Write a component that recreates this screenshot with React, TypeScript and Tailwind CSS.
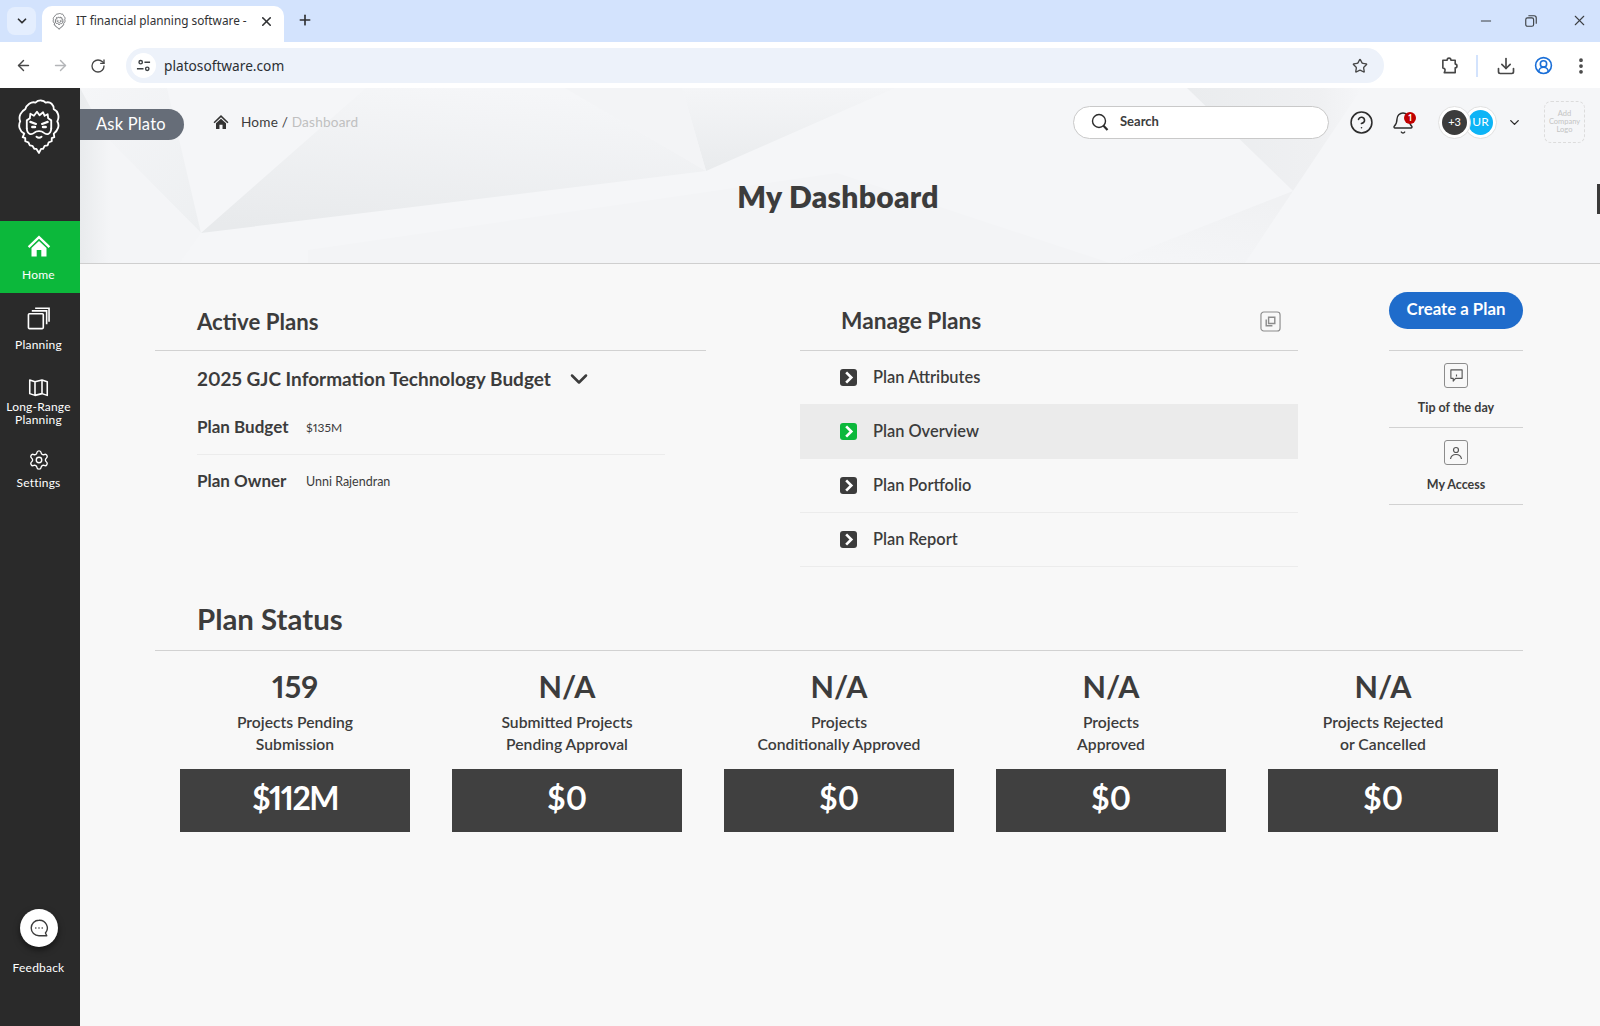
import React from "react";
import {
  ArrowLeft,
  ArrowRight,
  RotateCw,
  Star,
  Download,
  CircleUserRound,
  EllipsisVertical,
  Minus,
  X,
  Plus,
  ChevronDown,
  Settings,
  CircleHelp,
  Bell,
} from "lucide-react";

function HomeIcon({ className }: { className?: string }) {
  return (
    <svg viewBox="0 0 24 24" className={className} fill="currentColor">
      <path d="M12 1.5 0.8 12.2 2.4 14 12 4.8 21.6 14l1.6-1.8z" />
      <path d="M12 7 4.5 14v8.5h5.2V16h4.6v6.5h5.2V14z" />
    </svg>
  );
}

function PlatoLogo({ className, strokeWidth = 1.8 }: { className?: string; strokeWidth?: number }) {
  return (
    <svg viewBox="0 0 42 55" className={className} fill="none" stroke="currentColor" strokeWidth={strokeWidth} strokeLinejoin="round" strokeLinecap="round">
      <path d="M7 34C2 31 1 26 3 22 1 17 4 12 8 10 9 6 14 2 18 3.500 21 .5 26 1 28 3.500 33 2 36 6 36 10 40 12 42 17 39.500 22 42 26 40 31 36 34L36.500 37.500 34 38.500 34 41.500 31 42.500 30 45.500 27 46 25.500 49 23.500 49 21.500 53 19 49 17 49 15 46 12.500 45.500 11 42.500 8 41.500 8 38.500 5.500 37.500Z" />
      <path d="M9.500 29V21L12.500 19 13 14.500 16.500 16.500 19.500 12.500 22 16 25.500 13 27 16.500 30 15 30.500 19 33.500 21V29" />
      <path d="M9.500 29C10 35 14 35.500 17 33 19 31 24 31 26 33 29 35.500 33 35 33.500 29" />
      <path d="M13 22.500 18.500 24.500M30 22.500 24.500 24.500" strokeWidth={2.200} />
      <path d="M15 27.500H17.500M25.500 27.500H28" strokeWidth={2.600} />
      <path d="M19 37Q21.500 39 24 37" />
    </svg>
  );
}

function Chevron({ green }: { green?: boolean }) {
  return (
    <span className={`flex h-[17px] w-[17px] items-center justify-center rounded-[3px] ${green ? "bg-[#0cb83b]" : "bg-[#3c3c3c]"}`}>
      <svg viewBox="0 0 16 16" className="h-[15px] w-[15px]" fill="none" stroke="#fff" strokeWidth="2.800">
        <path d="M5.500 2.500 11 8l-5.500 5.500" />
      </svg>
    </span>
  );
}

function SideItem({ label, icon, active, heightClass, children }: { label?: string; icon: React.ReactNode; active?: boolean; heightClass: string; children?: React.ReactNode }) {
  return (
    <div className={`flex flex-col items-center pr-[3px] text-white ${heightClass} ${active ? "bg-[#0cb83b]" : ""}`}>
      {icon}
      {label ? <span className="text-[12px] leading-[14px] tracking-[0.2px]">{label}</span> : null}
      {children}
    </div>
  );
}

const statuses = [
  { count: "159", lines: ["Projects Pending", "Submission"], value: "$112M", vc: "tracking-[-1.5px]" },
  { count: "N/A", lines: ["Submitted Projects", "Pending Approval"], value: "$0", vc: "" },
  { count: "N/A", lines: ["Projects", "Conditionally Approved"], value: "$0", vc: "" },
  { count: "N/A", lines: ["Projects", "Approved"], value: "$0", vc: "" },
  { count: "N/A", lines: ["Projects Rejected", "or Cancelled"], value: "$0", vc: "" },
];

const plans = [
  { label: "Plan Attributes", h: "h-[53px]", extra: "" },
  { label: "Plan Overview", h: "h-[55px]", extra: "bg-[#ebebeb]", green: true },
  { label: "Plan Portfolio", h: "h-[54px]", extra: "border-b border-[#ececec]" },
  { label: "Plan Report", h: "h-[54px]", extra: "border-b border-[#ececec]" },
];

function HeaderArt() {
  return (
    <svg className="absolute inset-0 h-full w-full blur-[0.7px]" viewBox="0 0 1520 175" preserveAspectRatio="none">
      <defs>
        <linearGradient id="g1" x1="0.25" y1="1" x2="0.55" y2="0">
          <stop offset="0" stopColor="#e8eaec" />
          <stop offset="1" stopColor="#f5f6f8" />
        </linearGradient>
        <linearGradient id="g2" x1="0.5" y1="1" x2="0.5" y2="0">
          <stop offset="0" stopColor="#e9ebed" />
          <stop offset="1" stopColor="#f4f5f7" />
        </linearGradient>
        <linearGradient id="g3" x1="0" y1="0" x2="1" y2="1">
          <stop offset="0" stopColor="#f5f6f8" />
          <stop offset="1" stopColor="#edeff1" />
        </linearGradient>
        <linearGradient id="g4" x1="0" y1="0" x2="1" y2="0">
          <stop offset="0" stopColor="#eaecee" />
          <stop offset="0.75" stopColor="#eff0f2" />
          <stop offset="1" stopColor="#f5f6f8" />
        </linearGradient>
        <linearGradient id="g5" x1="0" y1="1" x2="0.6" y2="0">
          <stop offset="0" stopColor="#f5f6f8" />
          <stop offset="1" stopColor="#f0f1f3" />
        </linearGradient>
        <linearGradient id="g6" x1="0" y1="0" x2="1" y2="0">
          <stop offset="0" stopColor="#e9ebed" />
          <stop offset="0.25" stopColor="#f4f5f7" />
        </linearGradient>
      </defs>
      <rect width="1520" height="175" fill="#f5f6f8" />
      <polygon points="0,0 87,0 121,145 27,50" fill="url(#g3)" />
      <polygon points="0,0 27,50 121,145 100,175 0,175" fill="url(#g6)" />
      <polygon points="286,0 485,0 626,83 121,145" fill="url(#g1)" />
      <polygon points="602,0 815,0 626,83" fill="url(#g2)" />
      <polygon points="485,0 602,0 626,83" fill="#f3f4f6" />
      <polygon points="228,162 757,85 1030,175 228,175" fill="#f3f4f6" />
      <polygon points="1107,0 1282,0 1213,103" fill="url(#g4)" />
      <polygon points="1030,175 1213,103 1165,175" fill="url(#g5)" />
    </svg>
  );
}

export default function App() {
  return (
    <div className="flex h-[1026px] w-[1600px] flex-col overflow-hidden font-[family-name:Lato,sans-serif] text-[#3c3c3c] [font-variant-numeric:proportional-nums]">
      {/* Browser chrome */}
      <div className="font-[family-name:Noto_Sans,sans-serif]">
        <div className="flex h-[42px] items-end bg-[#d3e3fd] text-[#303133]">
          <div className="mb-[7px] ml-[7px] flex h-[28px] w-[29px] items-center justify-center rounded-[8px] bg-[#e4eefe]">
            <ChevronDown className="h-[14px] w-[14px]" strokeWidth={3} />
          </div>
          <div className="ml-[6px] flex h-[36px] w-[242px] items-center rounded-t-[10px] bg-white pb-[6px] pl-[10px] pr-[10px]">
            <PlatoLogo className="h-[17px] w-[14px] text-[#77797c]" strokeWidth={3} />
            <span className="ml-[10px] w-[178px] overflow-hidden whitespace-nowrap text-[11.800px]">IT financial planning software -</span>
            <X className="ml-[5px] h-[15px] w-[15px]" strokeWidth={2.500} />
          </div>
          <Plus className="mb-[14px] ml-[13px] h-[16px] w-[16px]" strokeWidth={2.500} />
          <div className="mb-[13px] ml-auto flex w-[122px] items-center text-[#3c4043]">
            <Minus className="h-[16px] w-[16px]" strokeWidth={1.500} />
            <svg viewBox="0 0 16 16" className="ml-[30px] h-[14px] w-[14px]" fill="none" stroke="currentColor" strokeWidth="1.300">
              <rect x="2" y="4.500" width="9" height="9.500" rx="2" />
              <path d="M5 2h6.500A2.500 2.500 0 0 1 14 4.500V11" />
            </svg>
            <X className="ml-[33px] h-[17px] w-[17px]" strokeWidth={1.500} />
          </div>
        </div>
        <div className="flex h-[46px] items-center rounded-t-[10px] bg-white pt-[1px] text-[#474747]">
          <ArrowLeft className="ml-[15px] h-[17px] w-[17px]" strokeWidth={2} />
          <ArrowRight className="ml-[20px] h-[17px] w-[17px] text-[#b3b5b8]" strokeWidth={2} />
          <RotateCw className="ml-[21px] h-[16px] w-[16px]" strokeWidth={2} />
          <div className="ml-[20px] flex h-[35px] w-[1258px] items-center rounded-full bg-[#edf2fa] pl-[5px] pr-[16px]">
            <span className="flex h-[25px] w-[25px] items-center justify-center rounded-full bg-white">
              <svg viewBox="0 0 16 16" className="h-[15px] w-[15px]" fill="none" stroke="#3c4043" strokeWidth="1.500">
                <circle cx="5" cy="4.500" r="1.800" />
                <path d="M9 4.500h6M1 11.500h7" />
                <circle cx="12" cy="11.500" r="1.800" />
              </svg>
            </span>
            <span className="ml-[8px] pt-[2px] text-[13.700px] text-[#2b2f33]">platosoftware.com</span>
            <Star className="ml-auto h-[16px] w-[16px]" strokeWidth={2} />
          </div>
          <svg viewBox="0 0 20 20" className="ml-[56px] h-[19px] w-[19px]" fill="none" stroke="currentColor" strokeWidth="1.700" strokeLinejoin="round">
            <path d="M3 4.500H7.500C7.500 1.500 11.500 1.500 11.500 4.500H16V8.500C18.500 8.500 18.500 12.500 16 12.500V17.500H4.500C5.800 15 5.800 13 3 12.500Z" />
          </svg>
          <span className="ml-[17px] h-[22px] w-[2px] bg-[#d3e3fd]" />
          <Download className="ml-[18px] h-[20px] w-[20px]" strokeWidth={2} />
          <CircleUserRound className="ml-[18px] h-[19px] w-[19px] text-[#1a6fd8]" strokeWidth={2} />
          <EllipsisVertical className="ml-[18px] h-[20px] w-[20px]" strokeWidth={2.500} />
        </div>
      </div>

      {/* App */}
      <div className="relative flex min-h-0 flex-1">
        <aside className="flex w-[80px] shrink-0 flex-col bg-[#2a2a2a]">
          <div className="flex h-[133px] justify-center pr-[3px] pt-[11px] text-white">
            <PlatoLogo className="h-[56px] w-[43px]" />
          </div>
          <SideItem label="Home" active heightClass="h-[72px] pt-[13px]" icon={<HomeIcon className="mb-[10px] h-[24px] w-[24px]" />} />
          <SideItem label="Planning" heightClass="h-[65px] pt-[14px]" icon={
            <svg viewBox="0 0 24 24" className="mb-[8px] h-[23px] w-[23px]" fill="none" stroke="currentColor" strokeWidth="1.700">
              <rect x="1.500" y="7" width="15.500" height="15.500" rx="1" />
              <path d="M5 4h15.500v14M8.500 1.300h14.500v14" />
            </svg>
          } />
          <SideItem heightClass="h-[72px] pt-[19px]" icon={
            <svg viewBox="0 0 24 24" className="mb-[3px] h-[21px] w-[21px]" fill="none" stroke="currentColor" strokeWidth="1.800" strokeLinejoin="round">
              <path d="M2 3.500 8 5.500 16 3.500 22 5.500V21L16 19 8 21 2 19ZM8 5.500V21M16 3.500V19" />
            </svg>
          }>
            <span className="text-center text-[12px] leading-[12.500px] tracking-[0.2px]">Long-Range<br />Planning</span>
          </SideItem>
          <SideItem label="Settings" heightClass="h-[75px] pt-[19px]" icon={<Settings className="mb-[5px] h-[22px] w-[22px]" strokeWidth={1.500} />} />
          <div className="mt-auto flex h-[117px] flex-col items-center pr-[3px] text-white">
            <span className="flex h-[38px] w-[38px] items-center justify-center rounded-full bg-white text-[#3c3c3c] shadow-[0_3px_6px_rgba(0,0,0,0.5)]">
              <svg viewBox="0 0 24 24" className="h-[22px] w-[22px]" fill="none" stroke="currentColor" strokeWidth="1.500">
                <path d="M12 3.500a8.500 8.500 0 1 0 0 17H20.500l-1.500-3A8.500 8.500 0 0 0 12 3.500z" strokeLinejoin="round" />
                <path d="M8.500 12h.01M12 12h.01M15.500 12h.01" strokeWidth="1.800" strokeLinecap="round" />
              </svg>
            </span>
            <span className="mt-[14px] text-[12px] leading-[14px] tracking-[0.2px]">Feedback</span>
          </div>
        </aside>

        <main className="relative min-w-0 flex-1 bg-[#f8f8f8]">
          <header className="relative h-[176px] overflow-hidden border-b-[1.500px] border-[#cfcfcf]">
            <HeaderArt />
            <div className="relative">
              <div className="flex h-[55px] items-center pt-[13px]">
                <div className="mt-[5px] flex h-[31px] w-[104px] items-center rounded-r-full bg-[#666d78] pl-[16px] text-[16.500px] tracking-[0.2px] text-white">Ask Plato</div>
                <HomeIcon className="ml-[29px] mt-0 h-[16px] w-[16px] text-[#333]" />
                <div className="ml-[12px] mt-[1px] text-[13.600px] tracking-[0.2px] text-[#3c3c3c]">
                  Home / <span className="text-[#c0c0c0]">Dashboard</span>
                </div>
                <div className="ml-auto flex h-[33px] w-[256px] items-center rounded-full border border-[#c9c9c9] bg-white pl-[17px]">
                  <svg viewBox="0 0 18 18" className="h-[18px] w-[18px]" fill="none" stroke="#2c2c2c" strokeWidth="1.400">
                    <circle cx="8" cy="8" r="6.500" />
                    <path d="M12.500 12.800 16.500 17" strokeWidth="2.200" />
                  </svg>
                  <span className="ml-[11px] text-[13px] font-bold text-[#3c3c3c]">Search</span>
                </div>
                <CircleHelp className="ml-[20px] h-[25px] w-[25px] text-[#2c2c2c]" strokeWidth={1.500} />
                <div className="relative ml-[17px] h-[25px] w-[24px]">
                  <Bell className="absolute left-0 top-[1px] h-[24px] w-[24px] text-[#2c2c2c]" strokeWidth={1.400} />
                  <span className="absolute -right-[1px] top-[2px] flex h-[12px] w-[12px] items-center justify-center rounded-full bg-[#c00000] text-[9px] font-bold text-white">1</span>
                </div>
                <div className="ml-[23px] flex items-center">
                  <span className="z-10 flex h-[33px] w-[33px] items-center justify-center rounded-full border border-[#e1e1e1] bg-white">
                    <span className="flex h-[25px] w-[25px] items-center justify-center rounded-full bg-[#3c3c3c] text-[11px] text-white">+3</span>
                  </span>
                  <span className="-ml-[7px] flex h-[33px] w-[33px] items-center justify-center rounded-full border border-[#e1e1e1] bg-white">
                    <span className="flex h-[25px] w-[25px] items-center justify-center rounded-full bg-[#0db4f6] text-[12px] text-white">UR</span>
                  </span>
                </div>
                <ChevronDown className="ml-[10px] h-[15px] w-[15px] text-[#2c2c2c]" strokeWidth={2.200} />
                <div className="ml-[22px] mr-[15px] flex h-[42px] w-[41px] items-center justify-center rounded-[7px] border border-dashed border-[#dcdcdc] text-center text-[7.500px] leading-[8px] text-[#c4c4c4]">
                  Add<br />Company<br />Logo
                </div>
              </div>
              <h1 className="mt-[36px] pr-[4px] text-center text-[30px] font-extrabold leading-[34px] tracking-[0.3px] text-[#3c3c3c]">My Dashboard</h1>
            </div>
          </header>

          <div className="pl-[75px] pr-[77px]">
            <div className="flex">
              <section className="w-[551px]">
                <div className="flex h-[87px] items-center border-b-[1.500px] border-[#d2d2d2] pl-[42px] pt-[29px] text-[22.200px] font-bold">Active Plans</div>
                <div className="flex h-[56px] items-center pl-[42px] text-[19px] font-bold">
                  2025 GJC Information Technology Budget
                  <ChevronDown className="ml-[14px] h-[28px] w-[28px]" strokeWidth={2.200} />
                </div>
                <div className="ml-[42px] mr-[41px] flex h-[48px] items-center border-b border-[#ececec] pb-[8px]">
                  <span className="w-[109px] text-[17px] font-bold">Plan Budget</span>
                  <span className="pt-[2px] text-[12px]">$135M</span>
                </div>
                <div className="ml-[42px] flex h-[52px] items-center">
                  <span className="w-[109px] text-[17px] font-bold">Plan Owner</span>
                  <span className="pt-[3px] text-[12.500px]">Unni Rajendran</span>
                </div>
              </section>

              <section className="ml-[94px] w-[498px]">
                <div className="flex h-[87px] items-center justify-between border-b-[1.500px] border-[#d2d2d2] pl-[41px] pr-[17px] pt-[29px]">
                  <span className="text-[22.700px] font-bold">Manage Plans</span>
                  <svg viewBox="0 0 22 22" className="h-[21px] w-[21px]" fill="none" stroke="#8c8c8c" strokeWidth="1.200">
                    <rect x="1" y="1" width="20" height="20" rx="3" />
                    <path d="M6.500 9v6.500H13M9 6.500h6.500V13H9z" strokeWidth="1.500" />
                  </svg>
                </div>
                {plans.map((p) => (
                  <div key={p.label} className={`flex items-center pl-[40px] text-[16.400px] font-semibold ${p.h} ${p.extra}`}>
                    <Chevron green={p.green} />
                    <span className="ml-[16px]">{p.label}</span>
                  </div>
                ))}
              </section>

              <aside className="ml-[91px] w-[134px]">
                <div className="h-[87px] border-b-[1.500px] border-[#d2d2d2] pt-[28px]">
                  <div className="flex h-[37px] items-center justify-center rounded-full bg-[#1f6ccb] pb-[3px] text-[16.800px] font-bold text-white">Create a Plan</div>
                </div>
                <div className="flex h-[77px] flex-col items-center border-b-[1.500px] border-[#d2d2d2] pt-[12px]">
                  <span className="flex h-[25px] w-[24px] items-center justify-center rounded-[3px] border border-[#8c8c8c]">
                    <svg viewBox="0 0 16 16" className="h-[15px] w-[15px]" fill="none" stroke="#555" strokeWidth="1.200">
                      <path d="M2 2h12v9H7l-2.500 3V11H2z" strokeLinejoin="round" />
                      <path d="M8 5v.01M8 7v2" />
                    </svg>
                  </span>
                  <span className="mt-[12px] text-[12.500px] font-bold leading-[16px]">Tip of the day</span>
                </div>
                <div className="flex h-[77px] flex-col items-center border-b-[1.500px] border-[#d2d2d2] pt-[12px]">
                  <span className="flex h-[25px] w-[24px] items-center justify-center rounded-[3px] border border-[#8c8c8c]">
                    <svg viewBox="0 0 16 16" className="h-[16px] w-[16px]" fill="none" stroke="#555" strokeWidth="1.200">
                      <circle cx="8" cy="5" r="2.500" />
                      <path d="M2.500 14c.5-3 2.500-4.500 5.500-4.500s5 1.500 5.500 4.500" />
                    </svg>
                  </span>
                  <span className="mt-[12px] text-[12.500px] font-bold leading-[16px]">My Access</span>
                </div>
              </aside>
            </div>

            <section className="mt-[21px]">
              <div className="flex h-[63px] items-center border-b-[1.500px] border-[#d2d2d2] pl-[42px] pt-[1px] text-[29.400px] font-bold">Plan Status</div>
              <div className="grid grid-cols-5 gap-[42px] px-[25px]">
                {statuses.map((s, i) => (
                  <div key={i} className="flex flex-col items-center text-center">
                    <div className="mt-[17px] text-[30.500px] font-bold leading-[36px]">{s.count}</div>
                    <div className="mt-[7px] text-[15.700px] font-semibold leading-[22px]">
                      {s.lines[0]}<br />{s.lines[1]}
                    </div>
                    <div className={`mt-[14px] flex h-[63px] w-full items-center justify-center bg-[#404040] pb-[6px] text-[32px] font-bold text-white ${s.vc}`}>{s.value}</div>
                  </div>
                ))}
              </div>
            </section>
          </div>
          <div className="absolute right-0 top-[96px] h-[30px] w-[3px] bg-[#3a3a3a]" />
        </main>
      </div>
    </div>
  );
}
